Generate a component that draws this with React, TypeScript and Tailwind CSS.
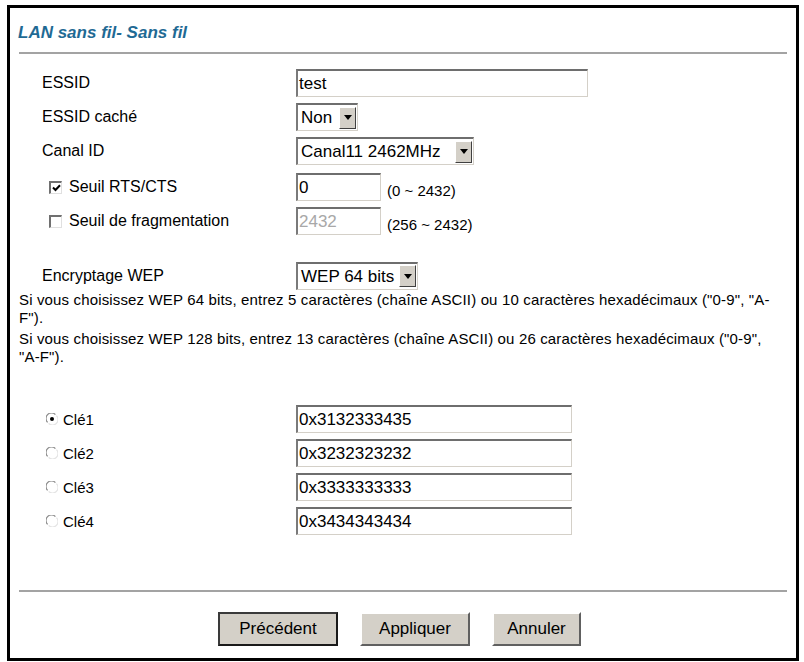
import React from "react";

const font = { fontFamily: '"Liberation Sans", Arial, sans-serif' };

function TextBox({ value, width, disabled }: { value: string; width: string; disabled?: boolean }) {
  return (
    <div
      className={`${width} h-[28px] flex items-center bg-white border-t-2 border-l-2 border-r border-b border-t-[#6e6e6e] border-l-[#7a7a7a] border-r-[#d4d0c8] border-b-[#d4d0c8] pl-[1px] text-[17px] leading-none whitespace-nowrap ${
        disabled ? "text-[#a8a8a8]" : "text-black"
      }`}
    >
      {value}
    </div>
  );
}

function Select({ value, width }: { value: string; width: string }) {
  return (
    <div
      className={`${width} h-[28px] flex items-center justify-between bg-white border-t-2 border-l-2 border-r border-b border-t-[#6e6e6e] border-l-[#7a7a7a] border-r-[#d4d0c8] border-b-[#d4d0c8] pl-[3px] text-[17px] leading-none text-black whitespace-nowrap`}
    >
      <span>{value}</span>
      <div className="w-[17px] h-[22px] mr-[1px] shrink-0 flex items-center justify-center bg-[#d4d0c8] border border-t-white border-l-white border-r-[#404040] border-b-[#404040]">
        <svg width="8" height="5" viewBox="0 0 8 5">
          <path d="M0 0h8L4 5z" fill="#000" />
        </svg>
      </div>
    </div>
  );
}

function Checkbox({ checked }: { checked?: boolean }) {
  return (
    <div className="w-[13px] h-[13px] bg-white border-t-2 border-l-2 border-r border-b border-t-[#707070] border-l-[#707070] border-r-[#e0e0e0] border-b-[#e0e0e0] flex items-center justify-center">
      {checked && (
        <svg width="9" height="8" viewBox="0 0 9 8">
          <path d="M1 3.5l2.5 2.5L8 1.2" stroke="#000" strokeWidth="2" fill="none" />
        </svg>
      )}
    </div>
  );
}

function Radio({ checked }: { checked?: boolean }) {
  return (
    <svg width="12" height="12" viewBox="0 0 12 12">
      <circle cx="6" cy="6" r="5.5" fill="#fff" />
      <path d="M1.6 9.4A5 5 0 0 1 9.4 1.6" stroke="#8a8a8a" strokeWidth="1.2" fill="none" />
      <path d="M10.4 2.6A5 5 0 0 1 2.6 10.4" stroke="#e4e4e4" strokeWidth="1.2" fill="none" />
      {checked && <circle cx="6" cy="6" r="2" fill="#000" />}
    </svg>
  );
}

function Button({ label, width, main }: { label: string; width: string; main?: boolean }) {
  return (
    <div
      className={`${width} h-[34px] flex items-center justify-center bg-[#d4d0c8] text-[17px] text-black ${
        main
          ? "border-2 border-t-[#3a3a3a] border-l-[#3a3a3a] border-r-[#1a1a1a] border-b-[#1a1a1a]"
          : "border-2 border-t-white border-l-white border-r-[#606060] border-b-[#606060]"
      }`}
    >
      {label}
    </div>
  );
}

const keys = [
  { label: "Clé1", value: "0x3132333435", checked: true },
  { label: "Clé2", value: "0x3232323232" },
  { label: "Clé3", value: "0x3333333333" },
  { label: "Clé4", value: "0x3434343434" },
];

export default function App() {
  return (
    <div className="w-[804px] h-[662px] bg-white pt-[5px] pl-[7px]" style={font}>
      <div className="w-[792px] h-[656px] border-[3px] border-black flex flex-col">
        {/* Title */}
        <div className="px-[8px] pt-[12px] h-[44px] text-[17px] font-bold italic text-[#1f6a94]">
          LAN sans fil- Sans fil
        </div>
        <div className="mx-[9px] h-[2px] bg-[#a3a3a3]" />

        {/* Basic settings */}
        <div className="mt-[15px] flex flex-col gap-[6px] text-[16px] text-black">
          <div className="flex items-center h-[28px]">
            <div className="w-[286px] pl-[32px]">ESSID</div>
            <TextBox value="test" width="w-[292px]" />
          </div>
          <div className="flex items-center h-[28px]">
            <div className="w-[286px] pl-[32px]">ESSID caché</div>
            <Select value="Non" width="w-[62px]" />
          </div>
          <div className="flex items-center h-[28px]">
            <div className="w-[286px] pl-[32px]">Canal ID</div>
            <Select value="Canal11 2462MHz" width="w-[178px]" />
          </div>
          <div className="flex items-center h-[28px] mt-[2px]">
            <div className="w-[286px] pl-[39px] flex items-center gap-[7px]">
              <Checkbox checked />
              <span>Seuil RTS/CTS</span>
            </div>
            <TextBox value="0" width="w-[85px]" />
            <span className="ml-[6px] mt-[8px] text-[15px]">(0 ~ 2432)</span>
          </div>
          <div className="flex items-center h-[28px]">
            <div className="w-[286px] pl-[39px] flex items-center gap-[7px]">
              <Checkbox />
              <span>Seuil de fragmentation</span>
            </div>
            <TextBox value="2432" width="w-[85px]" disabled />
            <span className="ml-[6px] mt-[8px] text-[15px]">(256 ~ 2432)</span>
          </div>
        </div>

        {/* WEP */}
        <div className="mt-[26px] flex items-center h-[29px] text-[16px] text-black">
          <div className="w-[286px] pl-[32px]">Encryptage WEP</div>
          <Select value="WEP 64 bits" width="w-[122px]" />
        </div>
        <div className="pl-[9px] pr-[14px] mt-[1px] text-[15px] leading-[18px] tracking-[0.15px] text-black">
          <p>
            Si vous choisissez WEP 64 bits, entrez 5 caractères (chaîne ASCII) ou 10 caractères hexadécimaux ("0-9", "A-F").
          </p>
          <p className="mt-[3px]">
            Si vous choisissez WEP 128 bits, entrez 13 caractères (chaîne ASCII) ou 26 caractères hexadécimaux ("0-9", "A-F").
          </p>
        </div>

        {/* Keys */}
        <div className="mt-[39px] flex flex-col gap-[6px] text-[15px] text-black">
          {keys.map((k) => (
            <div key={k.label} className="flex items-center h-[28px]">
              <div className="w-[286px] pl-[36px] flex items-center gap-[5px]">
                <Radio checked={k.checked} />
                <span className="mt-[3px]">{k.label}</span>
              </div>
              <TextBox value={k.value} width="w-[276px]" />
            </div>
          ))}
        </div>

        <div className="mx-[9px] mt-[55px] h-[2px] bg-[#a3a3a3]" />

        {/* Buttons */}
        <div className="mt-[20px] flex gap-[22px] pl-[208px]">
          <Button label="Précédent" width="w-[120px]" main />
          <Button label="Appliquer" width="w-[110px]" />
          <Button label="Annuler" width="w-[89px]" />
        </div>
      </div>
    </div>
  );
}
